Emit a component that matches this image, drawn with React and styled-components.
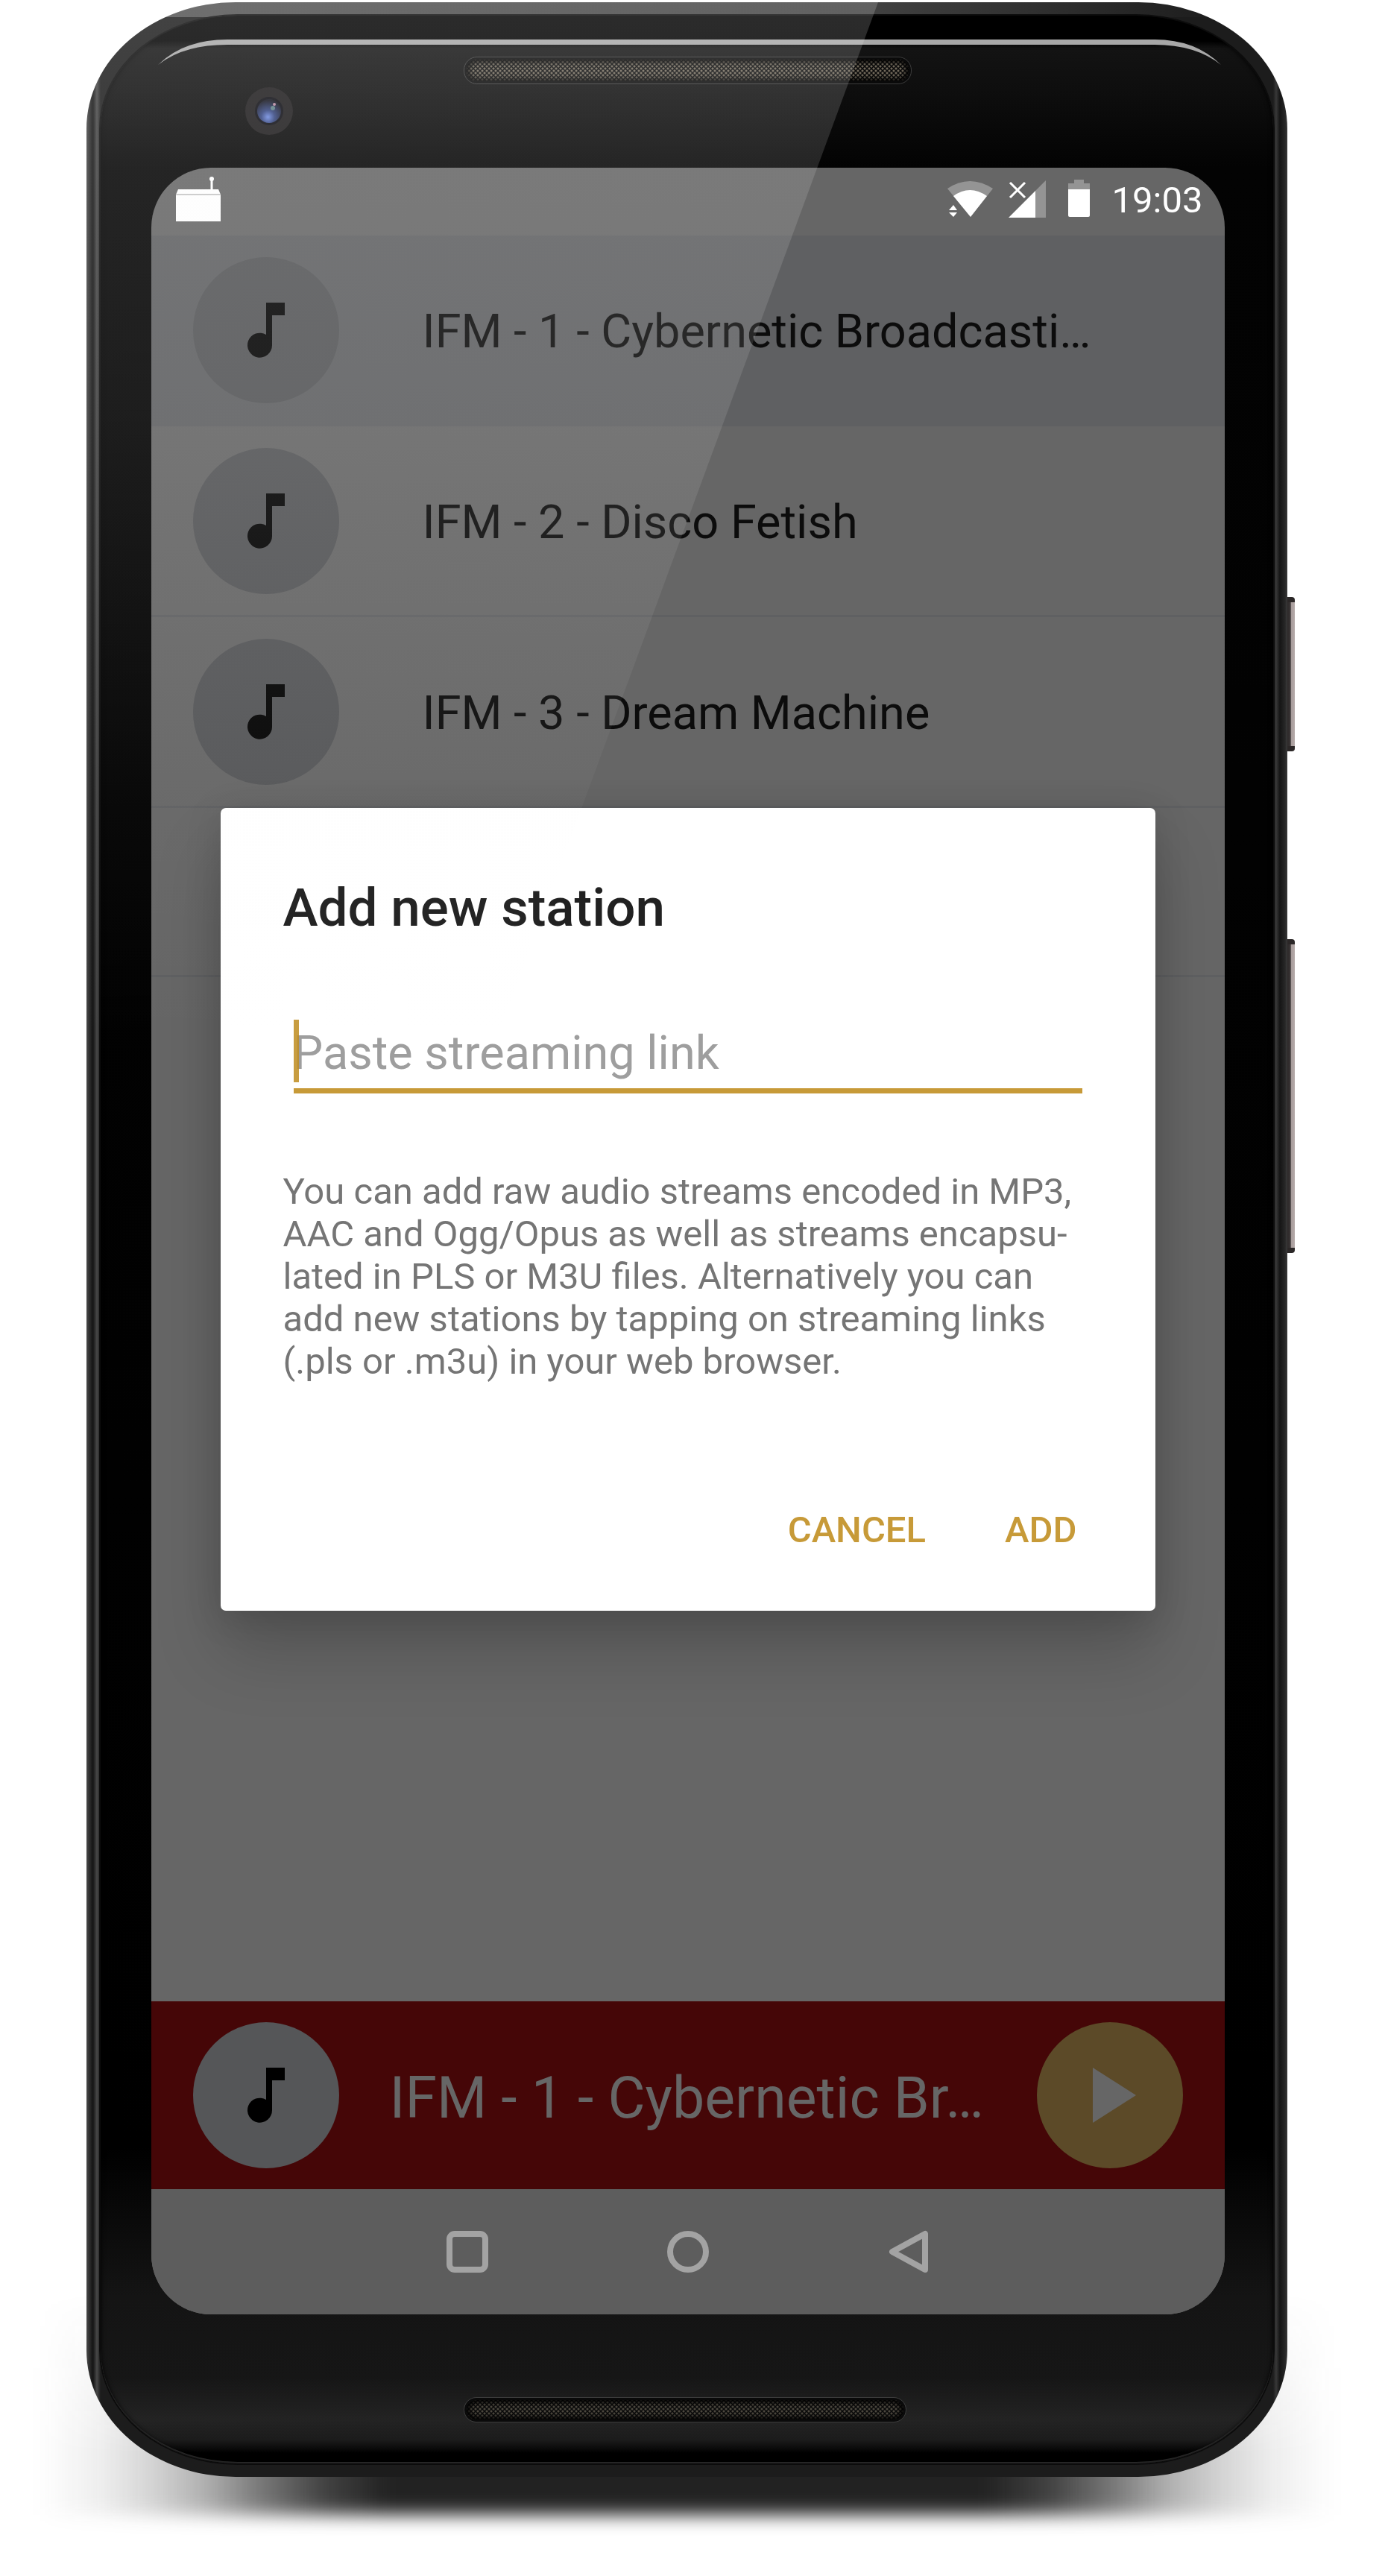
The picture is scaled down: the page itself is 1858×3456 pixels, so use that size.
import React from 'react';
import styled, { createGlobalStyle } from 'styled-components';

const GlobalStyle = createGlobalStyle`
  * { box-sizing: border-box; }
  body { margin: 0; background: #fff; font-family: Roboto, "Noto Sans", sans-serif; }
  button { font: inherit; border: 0; padding: 0; background: none; cursor: pointer; }
  h2, p, ul { margin: 0; padding: 0; }
`;

const Page = styled.main`
  display: flex;
  justify-content: center;
  padding: 3px 16px 132px 0;
  overflow: hidden;
`;

const Phone = styled.div`
  position: relative;
  width: 1611px;
  max-width: 100%;
  padding: 18px 19px;
`;

const Shell = styled.div`
  position: absolute;
  inset: 0;
  border-radius: 200px / 170px;
  background:
    linear-gradient(90deg, rgba(90, 90, 90, 0.9), rgba(90, 90, 90, 0.6) 65%, transparent 95%) 0 0 / 100% 20px no-repeat,
    linear-gradient(90deg, #4a4a4a 0, #1b1b1b 7px, #161616 9px, #484848 14px, #1c1c1c 19px, #1c1c1c 1592px, #383838 1596px, #151515 1601px, #272727 1608px, #3c3c3c 100%);
`;

const FloorShadow = styled.div`
  position: absolute;
  left: -80px;
  right: -80px;
  bottom: -120px;
  height: 380px;
  mask-image: linear-gradient(180deg, transparent, #000 60%);

  &::before {
    content: '';
    position: absolute;
    inset: 20px 14px 69px;
    background: linear-gradient(90deg, transparent, rgba(34, 34, 34, 0.08) 5%, rgba(34, 34, 34, 0.2) 9%, rgba(34, 34, 34, 0.36) 13%, rgba(34, 34, 34, 0.6) 17%, rgba(34, 34, 34, 0.85) 22%, #222 27%, #222 73%, rgba(34, 34, 34, 0.85) 78%, rgba(34, 34, 34, 0.6) 83%, rgba(34, 34, 34, 0.36) 87%, rgba(34, 34, 34, 0.2) 91%, rgba(34, 34, 34, 0.08) 95%, transparent);
    filter: blur(12px);
  }
`;

const SideKey = styled.div`
  position: absolute;
  left: 100%;
  top: ${(p) => p.$top}px;
  width: 10px;
  height: ${(p) => p.$length}px;
  border-radius: 0 4px 4px 0;
  border: solid #2b2727;
  border-width: 7px 0;
  background: linear-gradient(90deg, #2c2828 0, #3a3536 40%, #a89d9c 55%, #b5aaa9 100%);
`;

const Glass = styled.div`
  position: relative;
  display: flex;
  flex-direction: column;
  padding: 0 65px 0 68px;
  border-radius: 184px / 152px;
  background: linear-gradient(180deg, #000 0, #000 34px, #131313 44px, #0e0e0e 100px, #030303 204px, #000 2860px, #141414 3060px, #161616 3170px, #232323 3225px, #1c1c1c 3252px, #000 3270px, #000 100%);
  box-shadow: 0 0 0 2px #0c0c0c, inset 0 0 6px #000, inset 0 -2px 0 #3a3a3a;
`;

const TopBezel = styled.div`
  display: flex;
  justify-content: center;
  height: 204px;
  padding-top: 56px;
`;

const BottomBezel = styled.div`
  display: flex;
  justify-content: center;
  height: 200px;
  padding: 112px 8px 0 0;
`;

const Grille = styled.div`
  width: ${(p) => p.$width}px;
  height: ${(p) => p.$height}px;
  border-radius: 17px;
  border: 3px solid #0a0a0a;
  outline: 1px solid #3c3c3c;
  background:
    radial-gradient(circle, ${(p) => p.$mesh} 1px, transparent 2px) 0 0 / 6px 6px,
    radial-gradient(circle, ${(p) => p.$mesh} 1px, transparent 2px) 3px 3px / 6px 6px,
    #0a0a0a;
  box-shadow: inset 0 0 6px 3px #000;
`;

const GlassArt = styled.svg`
  position: absolute;
  left: -19px;
  top: -18px;
  width: 1608px;
  height: 1500px;
  pointer-events: none;
`;

const Screen = styled.div`
  position: relative;
  display: flex;
  flex-direction: column;
  height: 2880px;
  border-radius: 80px;
  overflow: hidden;
  background: #666;
`;

const StatusBar = styled.header`
  display: flex;
  align-items: center;
  height: 91px;
  padding: 0 29px 7px 33px;
  color: #fff;
  font-size: 49px;
  line-height: 84px;
`;

const Clock = styled.time`
  padding-top: 4px;
`;

const StatusIcons = styled.svg`
  width: 192px;
  height: 52px;
  margin: 0 28px 0 auto;
`;

const StationList = styled.ul`
  flex: 1;
  list-style: none;
`;

const Station = styled.li`
  display: flex;
  align-items: center;
  gap: 112px;
  height: ${(p) => p.$height}px;
  padding: 0 56px;
  border-bottom: 3px solid #5f6062;
  background: ${(p) => (p.$active ? '#5f6062' : 'transparent')};
  color: #0c0c0c;
  font-size: 63px;
`;

const Name = styled.span`
  flex: 1;
  white-space: nowrap;
  line-height: 84px;
  padding-top: 4px;
`;

const Disc = styled.span`
  display: flex;
  flex: none;
  align-items: center;
  justify-content: center;
  width: 196px;
  height: 196px;
  border-radius: 50%;
  background: ${(p) => p.$color};
  color: ${(p) => p.$ink || '#050505'};
`;

const Player = styled.section`
  display: flex;
  align-items: center;
  gap: 68px;
  height: 252px;
  padding: 0 56px;
  background: #450607;
  color: #666;
  font-size: 77px;
`;

const TrackName = styled(Name)`
  padding-top: 8px;
`;

const NavBar = styled.nav`
  display: flex;
  justify-content: center;
  align-items: center;
  gap: 212px;
  height: 168px;
  background: #5d5d5d;
`;

const NavButton = styled.button`
  display: flex;
  align-items: center;
  justify-content: center;
  width: 84px;
  height: 84px;
`;

const Overlay = styled.div`
  position: absolute;
  inset: 0;
  padding: 859px 93px 0;
`;

const Dialog = styled.form`
  display: flex;
  flex-direction: column;
  padding: 84px 84px 79px;
  height: 1077px;
  border-radius: 7px;
  background: #fff;
  box-shadow: 0 56px 90px rgba(0, 0, 0, 0.18), 0 8px 50px rgba(0, 0, 0, 0.14);
`;

const Title = styled.h2`
  color: #212121;
  font-size: 71px;
  font-weight: 500;
  line-height: 100px;
`;

const Field = styled.div`
  position: relative;
  margin: 92px 14px 0;
  border-bottom: 7px solid #c79a38;
`;

const LinkInput = styled.input`
  display: block;
  width: 100%;
  height: 100px;
  padding: 4px 0 0;
  border: 0;
  outline: 0;
  background: none;
  color: #212121;
  font: 400 63px/84px Roboto, "Noto Sans", sans-serif;
  &::placeholder { color: #9e9e9e; opacity: 1; }
`;

const Caret = styled.span`
  position: absolute;
  left: 0;
  top: 8px;
  width: 7px;
  height: 84px;
  background: rgba(190, 140, 30, 0.85);
`;

const Hint = styled.p`
  margin-top: 103px;
  color: #757575;
  font-size: 49px;
  line-height: 57px;
  hyphens: manual;
`;

const Actions = styled.div`
  display: flex;
  justify-content: flex-end;
  gap: 106px;
  margin-top: auto;
  padding-right: 21px;
`;

const TextButton = styled.button`
  color: #c79a38;
  font-size: 49px;
  font-weight: 500;
  line-height: 58px;
`;

const Note = () => (
  <svg width="50" height="74" viewBox="0 0 50 74" aria-hidden="true">
    <path fill="currentColor" d="M25 0H50V17H33V57A16.500 16.500 0 1 1 25 43Z" />
  </svg>
);

const RadioIcon = () => (
  <svg width="61" height="60" viewBox="0 0 61 60" role="img" aria-label="Radio playing">
    <path fill="#fff" d="M3 17H57L60 24V60H0V24Z" />
    <path fill="#c8c8c8" d="M0 23H60V25H0Z" />
    <path stroke="#fff" strokeWidth="3" d="M48 3V18" />
    <circle cx="48" cy="3" r="3" fill="#fff" />
  </svg>
);

const stations = [
  { name: 'IFM - 1 - Cybernetic Broadcasti…', height: 256, active: true },
  { name: 'IFM - 2 - Disco Fetish', height: 256 },
  { name: 'IFM - 3 - Dream Machine', height: 256 },
  { name: '', height: 227 },
];

function PhoneFace() {
  return (
    <Glass>
      <TopBezel>
        <Grille $width={599} $height={35} $mesh="#70685a" />
      </TopBezel>
      <Screen>
        <StatusBar>
          <RadioIcon />
          <StatusIcons viewBox="0 0 192 52" aria-hidden="true">
            <path fill="#949494" d="M0 12Q30-8 61 12L31 50Z" />
            <path fill="#fff" d="M8 22Q30 6 53 22L31 50ZM2 41L8 34L13 41ZM2 44H13L8 50Z" />
            <path fill="#949494" d="M132 1V51H117V16Z" />
            <path fill="#fff" d="M118 15V51H82Z" />
            <path stroke="#fff" strokeWidth="3" d="M84 4L104 24M104 4L84 24" />
            <path fill="#949494" d="M170 0H183V5H191V14H162V5H170Z" />
            <path fill="#fff" d="M162 13H191V48Q191 50 189 50H164Q162 50 162 48Z" />
          </StatusIcons>
          <Clock>19:03</Clock>
        </StatusBar>
        <StationList>
          {stations.map((s) => (
            <Station key={s.name} $active={s.active} $height={s.height}>
              {s.name && (
                <>
                  <Disc $color="#555658"><Note /></Disc>
                  <Name>{s.name}</Name>
                </>
              )}
            </Station>
          ))}
        </StationList>
        <Player>
          <Disc $color="#555658" $ink="#000"><Note /></Disc>
          <TrackName>IFM - 1 - Cybernetic Br…</TrackName>
          <Disc as="button" type="button" aria-label="Play" $color="#5c4a28" $ink="#666">
            <svg width="70" height="74" viewBox="0 0 70 74"><path fill="currentColor" d="M12 0L70 37L12 74Z" /></svg>
          </Disc>
        </Player>
        <NavBar>
          <NavButton type="button" aria-label="Recent apps">
            <svg width="56" height="56" viewBox="0 0 56 56" fill="none" stroke="#a3a3a3" strokeWidth="8"><rect x="4" y="4" width="48" height="48" rx="7" /></svg>
          </NavButton>
          <NavButton type="button" aria-label="Home">
            <svg width="56" height="56" viewBox="0 0 56 56" fill="none" stroke="#a3a3a3" strokeWidth="8"><circle cx="28" cy="28" r="24" /></svg>
          </NavButton>
          <NavButton type="button" aria-label="Back">
            <svg width="56" height="58" viewBox="0 0 56 58" fill="none" stroke="#a3a3a3" strokeWidth="8" strokeLinejoin="round"><path d="M50 5V53L6 29Z" /></svg>
          </NavButton>
        </NavBar>
        <Overlay>
          <Dialog role="dialog" aria-labelledby="dialog-title" onSubmit={(e) => e.preventDefault()}>
            <Title id="dialog-title">Add new station</Title>
            <Field>
              <Caret />
              <LinkInput type="url" aria-label="Streaming link" placeholder="Paste streaming link" />
            </Field>
            <Hint>
              You can add raw audio streams encoded in MP3, AAC and Ogg/Opus as well as
              streams encapsu&shy;lated in PLS or M3U files. Alternatively you can add new
              stations by tapping on streaming links (.pls or .m3u) in your web browser.
            </Hint>
            <Actions>
              <TextButton type="button">CANCEL</TextButton>
              <TextButton type="submit">ADD</TextButton>
            </Actions>
          </Dialog>
        </Overlay>
      </Screen>
      <BottomBezel>
        <Grille $width={592} $height={32} $mesh="#4d483f" />
      </BottomBezel>
      <GlassArt viewBox="116 3 1608 1500" aria-hidden="true">
        <defs>
          <linearGradient id="sheen" x1="0" y1="0" x2="0" y2="1">
            <stop offset="0" stopColor="#f4f4f4" stopOpacity="0.18" />
            <stop offset="0.16" stopColor="#f4f4f4" stopOpacity="0.14" />
            <stop offset="0.4" stopColor="#f4f4f4" stopOpacity="0.11" />
            <stop offset="0.77" stopColor="#f4f4f4" stopOpacity="0.03" />
            <stop offset="1" stopColor="#f4f4f4" stopOpacity="0" />
          </linearGradient>
          <radialGradient id="lens" cx="0.45" cy="0.75" r="0.7">
            <stop offset="0" stopColor="#6f8be0" />
            <stop offset="0.4" stopColor="#34457f" />
            <stop offset="1" stopColor="#14151f" />
          </radialGradient>
        </defs>
        <path fill="#a8a8a8" d="M212 87Q246 53 305 53H1549Q1604 53 1638 87Q1604 60 1549 60H305Q246 60 212 87Z" />
        <circle cx="361" cy="149" r="32" fill="#1d1b1c" />
        <circle cx="361" cy="149" r="19" fill="#0c0c12" />
        <circle cx="361" cy="149" r="16" fill="url(#lens)" />
        <circle cx="366" cy="145" r="3" fill="#5d7f86" />
        <circle cx="368" cy="140" r="2" fill="#b88aa0" />
        <path fill="url(#sheen)" d="M316 3H1178L664 1400H116V173A200 170 0 0 1 316 3Z" />
      </GlassArt>
    </Glass>
  );
}

export default function App() {
  return (
    <>
      <GlobalStyle />
      <Page>
        <Phone>
          <FloorShadow />
          <Shell />
          <SideKey $top={798} $length={207} />
          <SideKey $top={1257} $length={421} />
          <PhoneFace />
        </Phone>
      </Page>
    </>
  );
}
